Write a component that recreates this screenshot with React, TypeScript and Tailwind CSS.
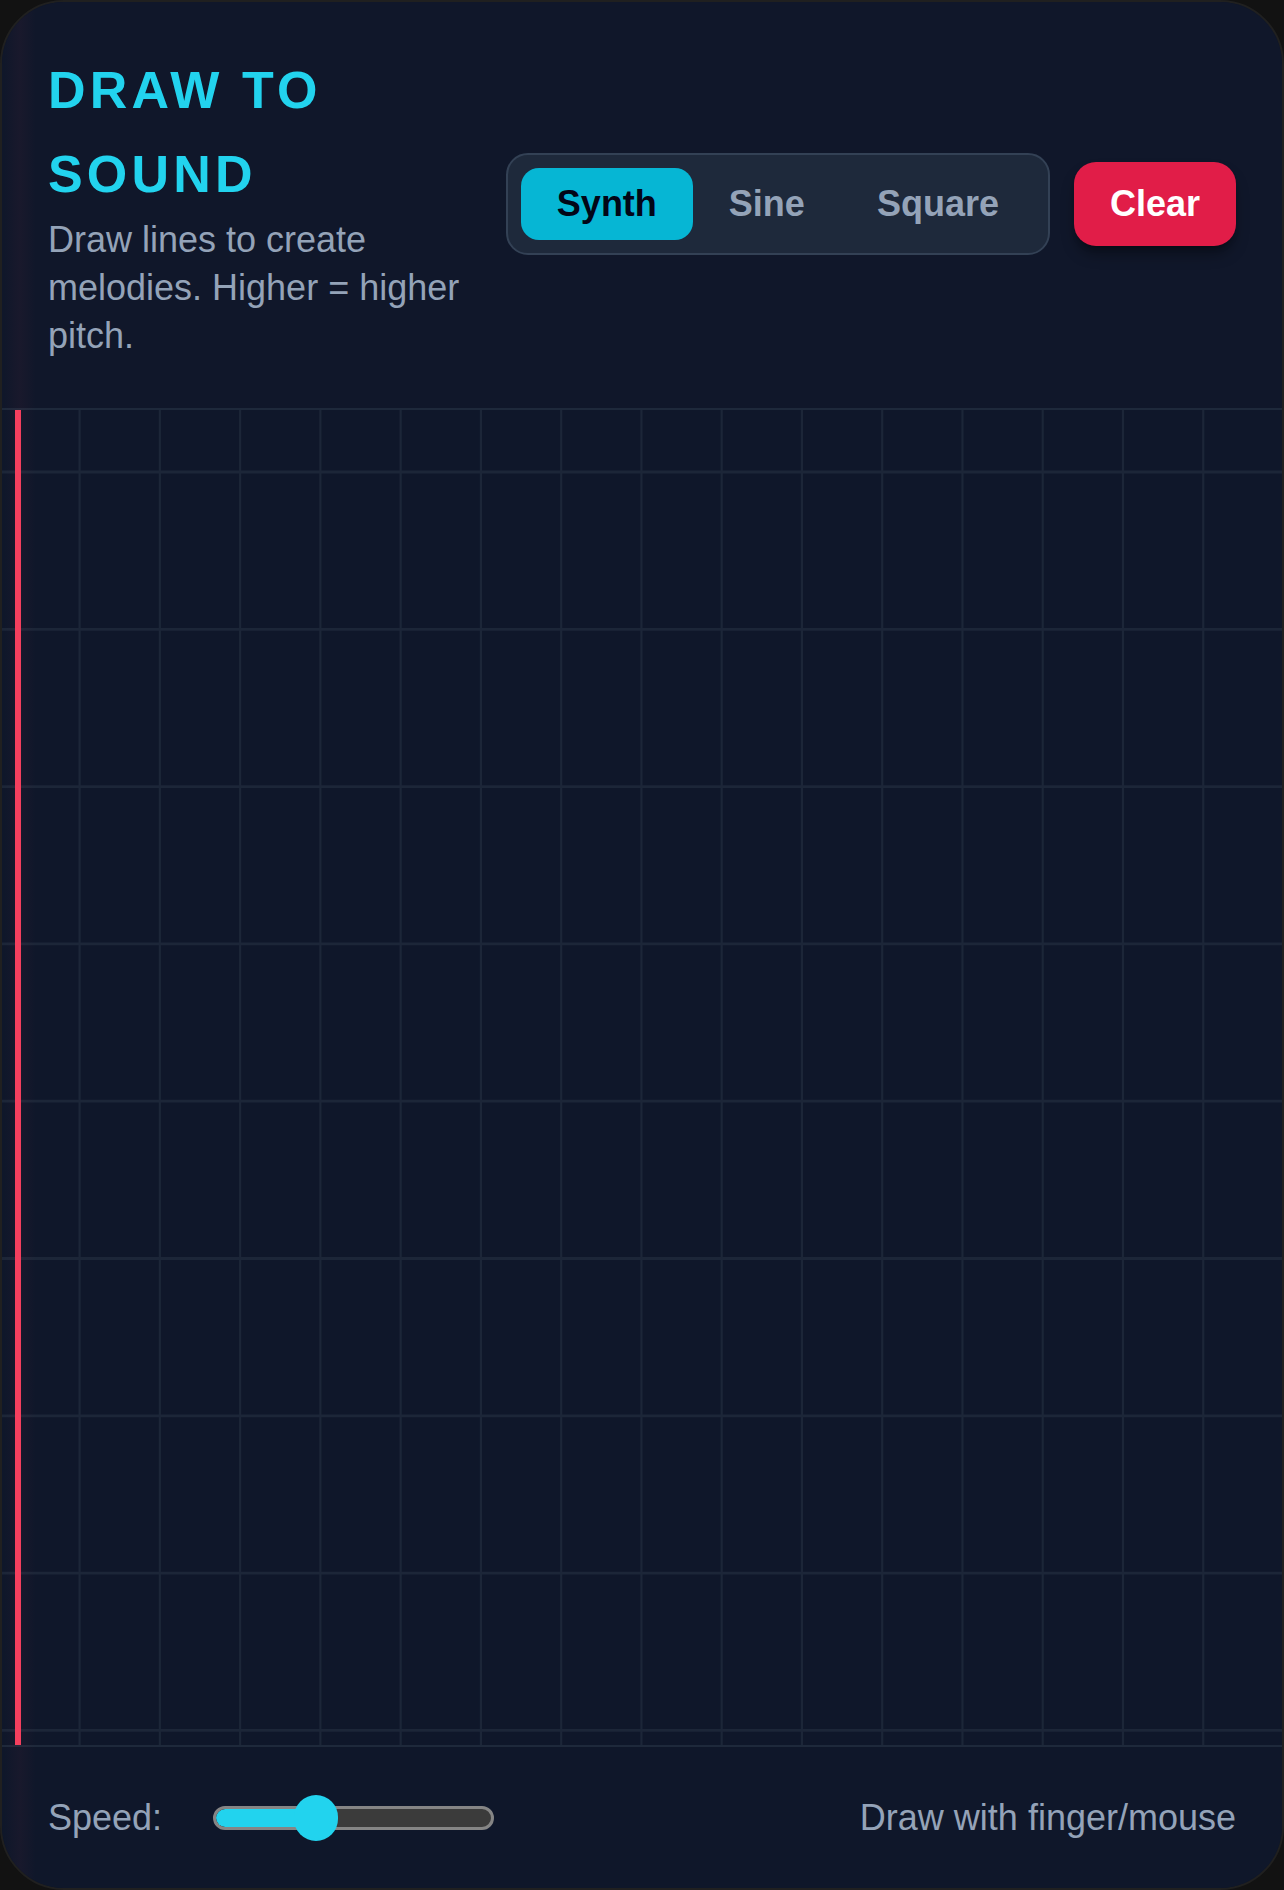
import React from 'react';

const WAVES = ['Synth', 'Sine', 'Square'];

// canvas grid, measured off the reference
const COLS = Array.from({ length: 15 }, (_, i) => 77.6 + i * 80.26);
const ROWS = Array.from({ length: 9 }, (_, i) => 62 + i * 157.3);

const GridCanvas: React.FC = () => {
  return (
    <div className="relative flex-1 bg-[#0f172a]">
      <svg className="absolute inset-0 h-full w-full" preserveAspectRatio="none">
        {COLS.map((x) => (
          <line key={`c${x}`} x1={x} y1={0} x2={x} y2="100%" stroke="#1c2638" strokeWidth={2.2} />
        ))}
        {ROWS.map((y) => (
          <line key={`r${y}`} x1={0} y1={y} x2="100%" y2={y} stroke="#1c2638" strokeWidth={2.8} />
        ))}
      </svg>
      {/* playhead */}
      <div className="absolute left-[13px] top-0 bottom-0 w-[6px] bg-[#f43f5e]"></div>
    </div>
  );
};

const SpeedSlider: React.FC<{ value: number }> = ({ value }) => {
  const trackW = 281;
  const thumb = 44;
  const center = thumb / 2 + (trackW - thumb) * value;
  return (
    <div className="relative flex h-[46px] w-[281px] items-center">
      <div className="relative h-[24px] w-full overflow-hidden rounded-full border-[3px] border-[#858585] bg-[#3b3b3b]">
        <div className="h-full rounded-full bg-[#22d3ee]" style={{ width: center }}></div>
      </div>
      <div
        className="absolute top-0 h-[46px] w-[44px] rounded-full bg-[#22d3ee]"
        style={{ left: center - thumb / 2 }}
      ></div>
    </div>
  );
};

export default function App() {
  const [wave, setWave] = React.useState('Synth');

  return (
    <div className="h-[1890px] w-full bg-[#121212]" style={{ fontFamily: '"Liberation Sans", Arial, sans-serif' }}>
      <div className="relative flex h-full flex-col overflow-hidden rounded-[64px] border-2 border-[#202020] bg-[#0f172a]">
        {/* header */}
        <div className="flex items-center gap-6 border-b-2 border-[#1e293b] bg-[#10172a] px-[46px] pt-[46px] pb-12">
          <div className="min-w-0 flex-1">
            <h1 className="text-[52px] font-bold leading-[84px] tracking-[0.08em] text-[#22d3ee]">DRAW TO SOUND</h1>
            <p className="text-[36px] leading-[48px] text-[#94a3b8]">
              Draw lines to create melodies. Higher = higher pitch.
            </p>
          </div>
          <div className="flex shrink-0 items-center gap-6">
            <div className="flex rounded-[22px] border-2 border-[#334155] bg-[#1e293b] p-[13px]">
              {WAVES.map((w) => (
                <button
                  key={w}
                  onClick={() => setWave(w)}
                  className={
                    w === wave
                      ? 'flex h-[72px] items-center rounded-[18px] bg-[#06b6d4] px-9 text-[36px] font-bold text-[#020617]'
                      : 'flex h-[72px] items-center rounded-[18px] px-9 text-[36px] font-bold text-[#94a3b8]'
                  }
                >
                  {w}
                </button>
              ))}
            </div>
            <button className="flex h-[84px] items-center rounded-[22px] bg-[#e11d48] px-[36px] text-[36px] font-bold text-white shadow-lg shadow-black/40">
              Clear
            </button>
          </div>
        </div>

        <GridCanvas />

        {/* footer */}
        <div className="flex h-[143px] shrink-0 items-center justify-between border-t-2 border-[#1e293b] bg-[#0f172a] px-[46px]">
          <div className="flex items-center gap-[51px]">
            <span className="text-[36px] text-[#94a3b8]">Speed:</span>
            <SpeedSlider value={0.34} />
          </div>
          <span className="text-[36px] text-[#94a3b8]">Draw with finger/mouse</span>
        </div>

        {/* faint glow of the playhead along the left edge */}
        <div className="pointer-events-none absolute left-[2px] top-0 bottom-0 w-[32px] bg-gradient-to-r from-transparent via-[#f43f5e]/[0.04] to-transparent"></div>
      </div>
    </div>
  );
}
